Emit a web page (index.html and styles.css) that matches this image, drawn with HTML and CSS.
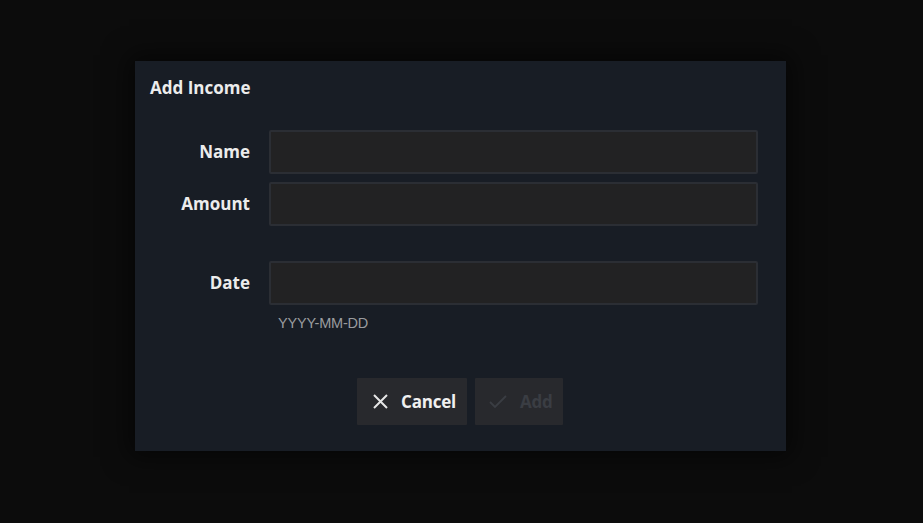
FILE: index.html
```html
<!DOCTYPE html>
<html>
<head>
<meta charset="utf-8">
<link rel="stylesheet" href="styles.css">
</head>
<body>
<div class="dialog">
  <div class="title">Add Income</div>
  <div class="form">
    <label class="label">Name</label>
    <div class="input"></div>
    <label class="label">Amount</label>
    <div class="input"></div>
    <label class="label date-label">Date</label>
    <div class="field date-field">
      <div class="input"></div>
      <div class="hint">YYYY-MM-DD</div>
    </div>
  </div>
  <div class="actions">
    <button class="btn cancel">
      <svg width="17" height="17" viewBox="0 0 17 17"><path d="M2 2 L15 15 M15 2 L2 15" stroke="#e6e6e6" stroke-width="2" fill="none"/></svg>
      <span>Cancel</span>
    </button>
    <button class="btn add" disabled>
      <svg width="20" height="17" viewBox="0 0 20 17"><path d="M2 9 L7 14 L18 3" stroke="#3a3d43" stroke-width="1.8" fill="none"/></svg>
      <span>Add</span>
    </button>
  </div>
</div>
</body>
</html>
```
FILE: styles.css
```css
html, body {
  margin: 0;
  padding: 0;
  background: #0c0c0c;
  height: 100%;
}
body {
  display: flex;
  justify-content: center;
  align-items: flex-start;
  padding-top: 61px;
  box-sizing: border-box;
  font-family: "Open Sans", "Noto Sans", sans-serif;
}
.dialog {
  width: 651px;
  height: 390px;
  margin-left: -2px;
  background: #181d25;
  box-shadow: 0 0 24px 6px rgba(0,0,0,0.55);
  box-sizing: border-box;
  padding: 15px 28px 26px 15px;
  display: flex;
  flex-direction: column;
}
.title {
  color: #ececec;
  font-size: 17px;
  font-weight: 700;
  line-height: 24px;
  letter-spacing: 0;
}
.form {
  display: grid;
  grid-template-columns: 100px 489px;
  column-gap: 19px;
  row-gap: 8px;
  margin-top: 30px;
}
.label {
  color: #ececec;
  font-size: 17px;
  font-weight: 700;
  text-align: right;
  line-height: 44px;
  letter-spacing: 0;
}
.input {
  height: 44px;
  box-sizing: border-box;
  background: #222223;
  border: 2px solid #2b2e34;
  border-radius: 2px;
}
.date-label, .date-field {
  margin-top: 27px;
}
.label.date-label {
  align-self: start;
}
.hint {
  font-family: "Liberation Sans", Arial, sans-serif;
  color: #9a9c9f;
  font-size: 14.5px;
  margin-top: 10px;
  padding-left: 9px;
  letter-spacing: -0.2px;
}
.actions {
  margin-top: auto;
  display: flex;
  justify-content: center;
  gap: 8px;
  padding-left: 12px;
}
.btn {
  height: 47px;
  border: none;
  border-radius: 1px;
  background: #28292d;
  display: flex;
  align-items: center;
  gap: 12px;
  font-family: "Open Sans", "Noto Sans", sans-serif;
  font-size: 17px;
  font-weight: 700;
  letter-spacing: -0.2px;
  padding: 0 6px 0 15px;
}
.cancel {
  width: 110px;
  color: #f0f0f0;
}
.add {
  width: 88px;
  color: #3a3d43;
  padding-left: 13px;
  gap: 12px;
}
```
